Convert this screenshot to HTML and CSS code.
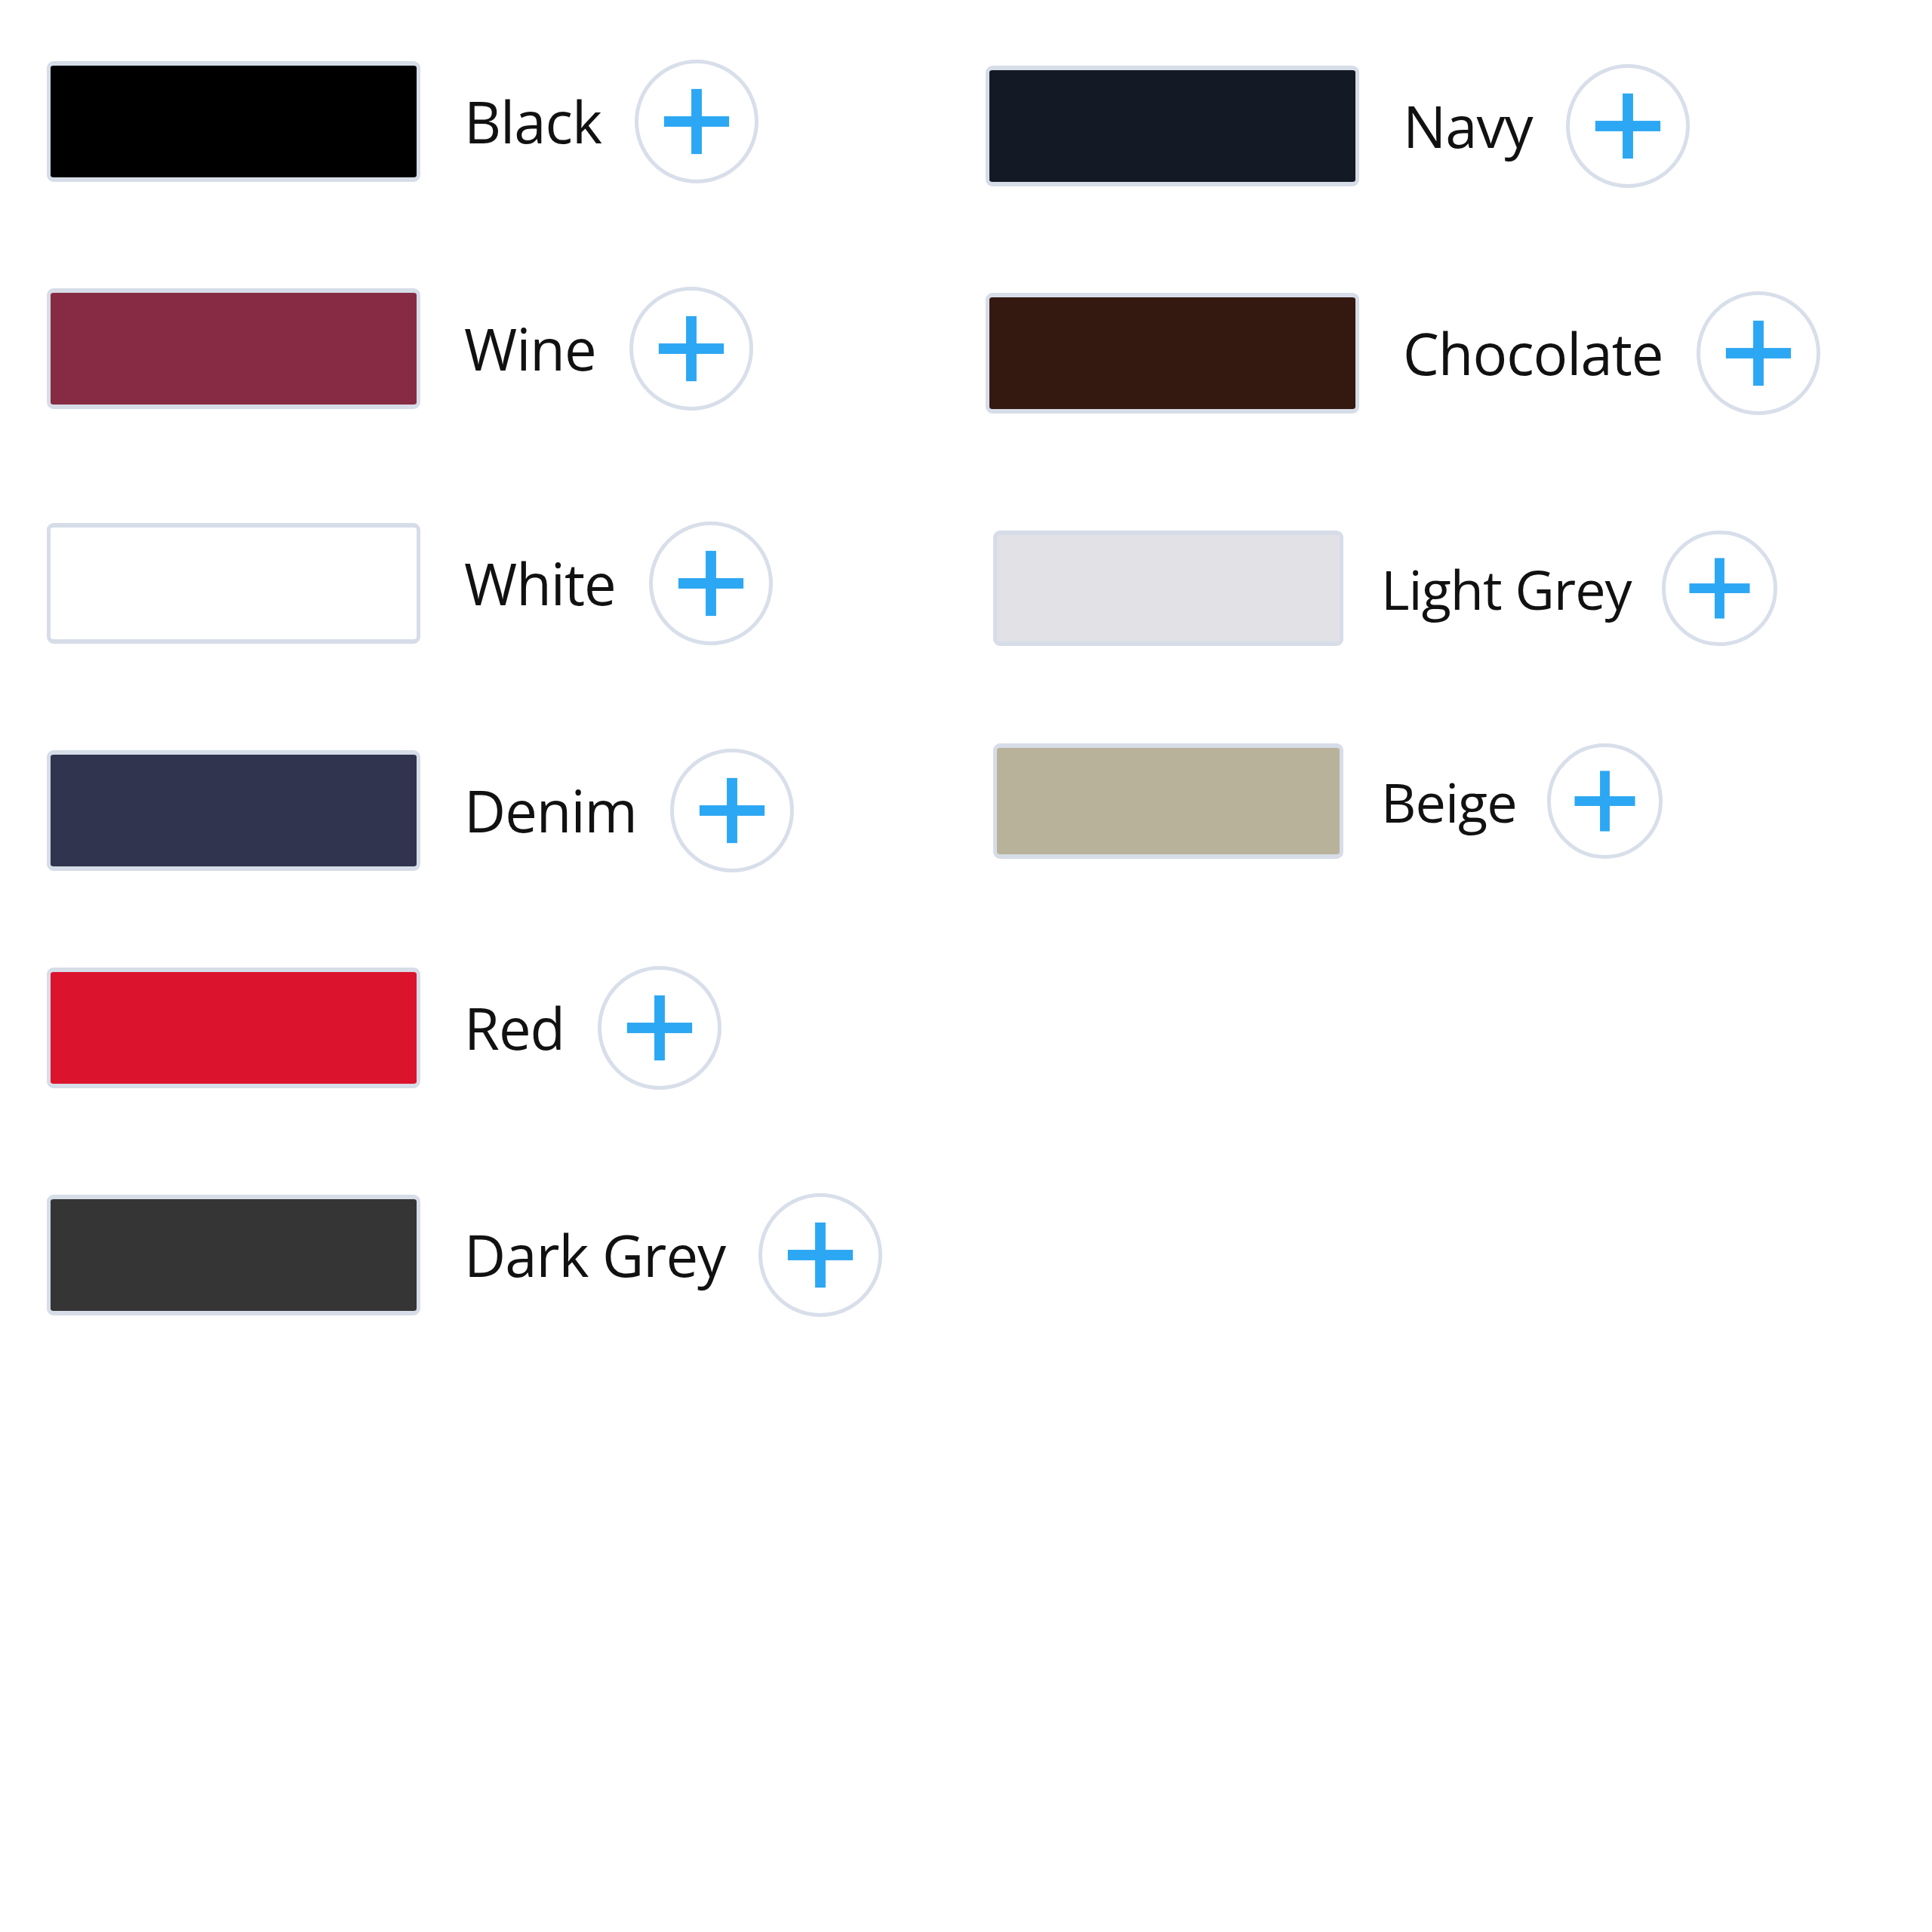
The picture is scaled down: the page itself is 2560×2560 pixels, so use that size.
FILE: index.html
```html
<!DOCTYPE html>
<html lang="en">
<head>
<meta charset="utf-8">
<title>Colours</title>
<link rel="stylesheet" href="styles.css">
</head>
<body>
<div class="palette">
  <div class="col col-left">
    <div class="item"><div class="swatch c-black"></div><span class="label">Black</span><button class="add"><svg viewBox="0 0 100 100"><rect x="22" y="45.5" width="56" height="9"/><rect x="45.5" y="22" width="9" height="56"/></svg></button></div>
    <div class="item"><div class="swatch c-wine"></div><span class="label">Wine</span><button class="add"><svg viewBox="0 0 100 100"><rect x="22" y="45.5" width="56" height="9"/><rect x="45.5" y="22" width="9" height="56"/></svg></button></div>
    <div class="item item-lower"><div class="swatch c-white"></div><span class="label">White</span><button class="add"><svg viewBox="0 0 100 100"><rect x="22" y="45.5" width="56" height="9"/><rect x="45.5" y="22" width="9" height="56"/></svg></button></div>
    <div class="item"><div class="swatch c-denim"></div><span class="label">Denim</span><button class="add"><svg viewBox="0 0 100 100"><rect x="22" y="45.5" width="56" height="9"/><rect x="45.5" y="22" width="9" height="56"/></svg></button></div>
    <div class="item item-higher"><div class="swatch c-red"></div><span class="label">Red</span><button class="add"><svg viewBox="0 0 100 100"><rect x="22" y="45.5" width="56" height="9"/><rect x="45.5" y="22" width="9" height="56"/></svg></button></div>
    <div class="item"><div class="swatch c-darkgrey"></div><span class="label">Dark Grey</span><button class="add"><svg viewBox="0 0 100 100"><rect x="22" y="45.5" width="56" height="9"/><rect x="45.5" y="22" width="9" height="56"/></svg></button></div>
  </div>
  <div class="col col-right">
    <div class="item"><div class="swatch c-navy"></div><span class="label">Navy</span><button class="add"><svg viewBox="0 0 100 100"><rect x="22" y="45.5" width="56" height="9"/><rect x="45.5" y="22" width="9" height="56"/></svg></button></div>
    <div class="item"><div class="swatch c-chocolate"></div><span class="label">Chocolate</span><button class="add"><svg viewBox="0 0 100 100"><rect x="22" y="45.5" width="56" height="9"/><rect x="45.5" y="22" width="9" height="56"/></svg></button></div>
    <div class="item item-sm item-sm-first"><div class="swatch c-lightgrey"></div><span class="label">Light Grey</span><button class="add"><svg viewBox="0 0 100 100"><rect x="22" y="45.5" width="56" height="9"/><rect x="45.5" y="22" width="9" height="56"/></svg></button></div>
    <div class="item item-sm item-sm-second"><div class="swatch c-beige"></div><span class="label">Beige</span><button class="add"><svg viewBox="0 0 100 100"><rect x="22" y="45.5" width="56" height="9"/><rect x="45.5" y="22" width="9" height="56"/></svg></button></div>
  </div>
</div>
</body>
</html>
```

FILE: styles.css
```css
html, body {
  margin: 0;
  padding: 0;
  background: #ffffff;
}

body {
  font-family: "Open Sans", "Noto Sans", "Liberation Sans", sans-serif;
  color: #111111;
}

.palette {
  display: grid;
  grid-template-columns: 1244px auto;
  padding: 79px 0 0 62px;
}

.col {
  display: flex;
  flex-direction: column;
  gap: 137px;
}

.col-right {
  padding-top: 6px;
}

.item {
  display: flex;
  align-items: center;
  height: 164px;
}

.item-lower {
  margin-top: 10px;
}

.item-higher {
  margin-top: -13px;
}

.swatch {
  box-sizing: border-box;
  width: 495px;
  height: 160px;
  border: 5px solid #d6dde8;
  border-top-width: 6px;
  border-bottom-width: 6px;
  border-radius: 9px;
}

.label {
  margin-left: 58px;
  margin-right: 44px;
  font-size: 76px;
  line-height: 1;
  letter-spacing: -1px;
  white-space: nowrap;
}

.add {
  box-sizing: border-box;
  width: 164px;
  height: 164px;
  padding: 0;
  border: 5px solid #d8dfea;
  border-radius: 50%;
  background: #ffffff;
  display: flex;
  align-items: center;
  justify-content: center;
}

.add svg {
  width: 154px;
  height: 154px;
  fill: #2ca7f3;
}

.item-sm {
  height: 153px;
  margin-left: 10px;
}

.item-sm-first {
  margin-top: 16px;
}

.item-sm-second {
  margin-top: -8px;
}

.item-sm .swatch {
  width: 464px;
  height: 153px;
}

.item-sm .label {
  margin-left: 50px;
  margin-right: 40px;
  font-size: 72px;
}

.item-sm .add {
  width: 153px;
  height: 153px;
}

.item-sm .add svg {
  width: 143px;
  height: 143px;
}

.c-black { background: #000000; }
.c-wine { background: #872b44; }
.c-white { background: #ffffff; }
.c-denim { background: #31344f; }
.c-red { background: #db132d; }
.c-darkgrey { background: #353535; }
.c-navy { background: #131a26; }
.c-chocolate { background: #33190f; }
.c-lightgrey { background: #e1e1e6; }
.c-beige { background: #b9b29a; }
```
